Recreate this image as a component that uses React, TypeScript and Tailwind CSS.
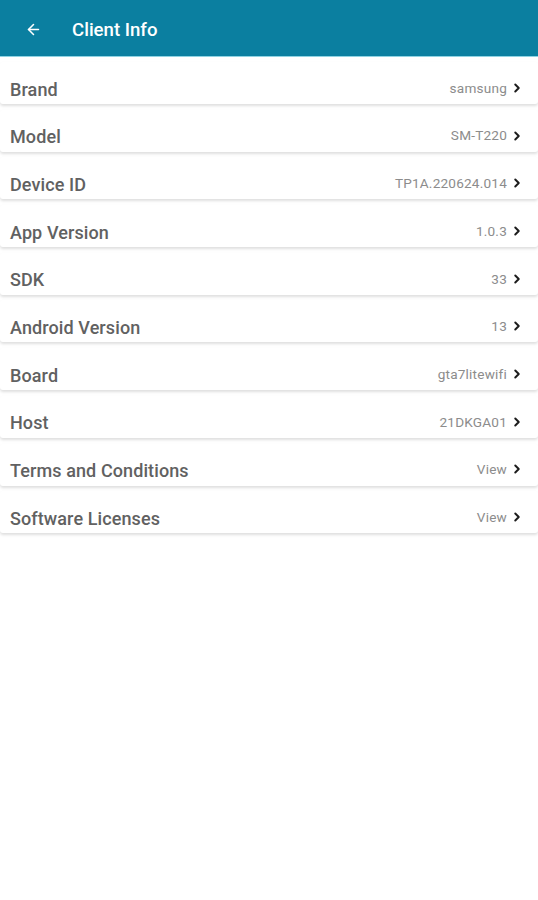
import { ArrowLeft, ChevronRight } from 'lucide-react';

const rows: [string, string][] = [
  ['Brand', 'samsung'],
  ['Model', 'SM-T220'],
  ['Device ID', 'TP1A.220624.014'],
  ['App Version', '1.0.3'],
  ['SDK', '33'],
  ['Android Version', '13'],
  ['Board', 'gta7litewifi'],
  ['Host', '21DKGA01'],
  ['Terms and Conditions', 'View'],
  ['Software Licenses', 'View'],
];

export default function App() {
  return (
    <div className="min-h-[900px] bg-white font-['Roboto',sans-serif]">
      <div className="flex h-[57px] items-center border-b border-[#8fd3e3] bg-[#0b7fa0] pl-[25px] pt-[3px]">
        <ArrowLeft className="h-[17px] w-[17px] text-white" strokeWidth={2.2} />
        <span className="ml-[30px] pt-[3px] text-[18.6px] font-medium text-white">Client Info</span>
      </div>

      {/* info rows */}
      <div className="flex flex-col gap-[5.7px] pt-[5px]">
        {rows.map(([label, value]) => (
          <div
            key={label}
            className="flex h-[42px] items-center justify-between rounded-[3px] bg-white pl-[10px] pr-[14px] pt-[12px] shadow-[0_2px_3px_rgba(0,0,0,0.13)]"
          >
            <span className="text-[18px] font-medium tracking-[0.1px] text-[#616161]">{label}</span>
            <div className="flex items-center gap-[3px] pb-[2px]">
              <span className="text-[13.6px] tracking-[0.2px] text-[#8c8c8c]">{value}</span>
              <ChevronRight className="h-[14px] w-[14px] text-[#1c1c1c]" strokeWidth={3.4} />
            </div>
          </div>
        ))}
      </div>
    </div>
  );
}
